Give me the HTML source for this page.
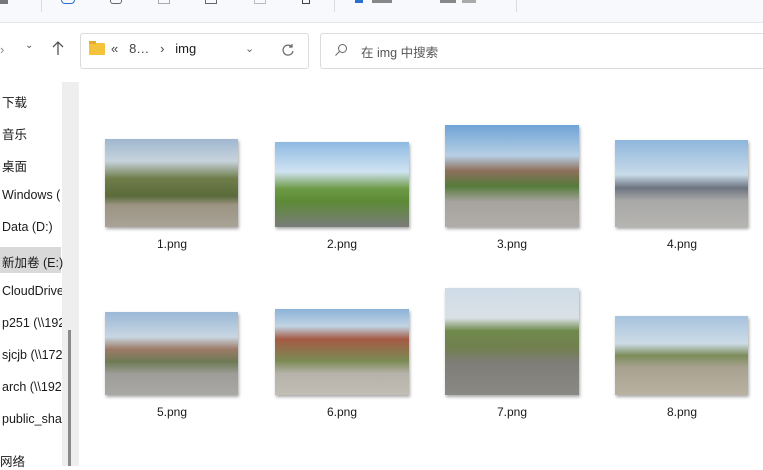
<!DOCTYPE html>
<html><head><meta charset="utf-8"><style>
body{margin:0;width:763px;height:466px;overflow:hidden;background:#fff;font-family:"Liberation Sans","Noto Sans CJK SC",sans-serif;position:relative}
.a{position:absolute}
.tb{left:0;top:0;width:763px;height:22px;background:#f7f9fc;border-bottom:1px solid #e6e6e6}
.nav{font-size:12.5px;color:#1a1a1a}
.th{position:absolute;box-shadow:1px 2px 3px rgba(0,0,0,.35)}
.lb{position:absolute;width:134px;text-align:center;font-size:12px;color:#1a1a1a}
</style></head><body>
<div class="a tb"></div>
<div class="a" style="left:41px;top:0;width:1px;height:12px;background:#ddd"></div>
<div class="a" style="left:334px;top:0;width:1px;height:12px;background:#ddd"></div>
<div class="a" style="left:516px;top:0;width:1px;height:12px;background:#ddd"></div>
<div class="a" style="left:61px;top:0;width:12px;height:3px;border:1.5px solid #2a6fd0;border-top:none;border-radius:0 0 4px 4px"></div>
<div class="a" style="left:110px;top:0;width:10px;height:3px;border:1.5px solid #666;border-top:none;border-radius:0 0 3px 3px"></div>
<div class="a" style="left:158px;top:0;width:10px;height:3px;border:1px solid #aaa;border-top:none"></div>
<div class="a" style="left:205px;top:0;width:10px;height:3px;border:1.5px solid #666;border-top:none"></div>
<div class="a" style="left:254px;top:0;width:10px;height:3px;border:1px solid #bbb;border-top:none"></div>
<div class="a" style="left:302px;top:0;width:6px;height:3px;border:1.5px solid #444;border-top:none"></div>
<div class="a" style="left:355px;top:0;width:8px;height:3px;background:#2a6fd0"></div>
<div class="a" style="left:372px;top:0;width:20px;height:3px;background:#888"></div>
<div class="a" style="left:440px;top:0;width:16px;height:3px;background:#888"></div>
<div class="a" style="left:462px;top:0;width:14px;height:3px;background:#aaa"></div>
<div class="a" style="left:0;top:0;width:8px;height:4px;background:#777"></div>
<!-- address row -->
<div class="a" style="left:0;top:42px;font-size:13px;color:#888">›</div>
<div class="a" style="left:25px;top:40px;font-size:10px;color:#555">⌄</div>
<svg class="a" style="left:51px;top:40px" width="14" height="16"><path d="M7 2V15M2 7L7 2L12 7" stroke="#555" fill="none" stroke-width="1.3"/></svg>
<div class="a" style="left:80px;top:33px;width:227px;height:34px;border:1px solid #dcdcdc;border-radius:3px"></div>
<div class="a" style="left:89px;top:43px;width:16px;height:12px;background:#f5c33b;border-radius:1px"></div>
<div class="a" style="left:89px;top:41px;width:7px;height:3px;background:#e9a92c"></div>
<div class="a" style="left:111px;top:41px;font-size:13px;color:#444">« &nbsp;&nbsp;8… &nbsp;&nbsp;› &nbsp;&nbsp;<span style="color:#1a1a1a">img</span></div>
<div class="a" style="left:245px;top:42px;font-size:11px;color:#666">⌄</div>
<svg class="a" style="left:281px;top:43px" width="14" height="14"><path d="M11 4A5 5 0 1 0 12 8M11 1V4H8" stroke="#666" fill="none" stroke-width="1.2"/></svg>
<div class="a" style="left:320px;top:33px;width:450px;height:34px;border:1px solid #dcdcdc;border-radius:3px"></div>
<svg class="a" style="left:334px;top:43px" width="14" height="14"><circle cx="8.5" cy="5.5" r="4" stroke="#666" fill="none"/><path d="M5.5 8.5L1.5 12.5" stroke="#666"/></svg>
<div class="a" style="left:361px;top:42px;font-size:12.5px;color:#555">在 img 中搜索</div>
<!-- sidebar -->
<div class="a" style="left:0;top:247px;width:61px;height:26px;background:#d9d9d9"></div>
<div class="a" style="left:62px;top:82px;width:16px;height:384px;background:#eeeeee"></div>
<div class="a" style="left:68px;top:330px;width:3px;height:136px;background:#8a8a8a"></div>
<div class="a" style="left:78px;top:82px;width:1px;height:384px;background:#f0f0f0"></div>
<div class="a nav" style="left:2px;top:92px">下载</div>
<div class="a nav" style="left:2px;top:124px">音乐</div>
<div class="a nav" style="left:2px;top:156px">桌面</div>
<div class="a nav" style="left:2px;top:188px;width:60px;overflow:hidden;white-space:nowrap">Windows (</div>
<div class="a nav" style="left:2px;top:220px">Data (D:)</div>
<div class="a nav" style="left:2px;top:252px">新加卷 (E:)</div>
<div class="a nav" style="left:2px;top:284px;width:60px;overflow:hidden;white-space:nowrap">CloudDrive</div>
<div class="a nav" style="left:2px;top:316px;width:60px;overflow:hidden;white-space:nowrap">p251 (\\192</div>
<div class="a nav" style="left:2px;top:348px;width:60px;overflow:hidden;white-space:nowrap">sjcjb (\\172</div>
<div class="a nav" style="left:2px;top:380px;width:60px;overflow:hidden;white-space:nowrap">arch (\\192</div>
<div class="a nav" style="left:2px;top:412px;width:60px;overflow:hidden;white-space:nowrap">public_share</div>
<div class="a nav" style="left:0;top:451px">网络</div>
<!-- thumbnails -->
<div class="th" style="left:105px;top:139px;width:133px;height:88px;background:linear-gradient(#9fb7d0 0%,#c7d3dc 25%,#6f7d4a 45%,#5a6a3a 65%,#9c9483 75%,#a8a396 100%)"></div>
<div class="th" style="left:275px;top:142px;width:134px;height:85px;background:linear-gradient(#8fb9e2 0%,#cfe3f1 35%,#6d9a45 55%,#5c8a36 70%,#7a7c7a 100%)"></div>
<div class="th" style="left:445px;top:125px;width:134px;height:102px;background:linear-gradient(#6fa3d6 0%,#b7cfe4 30%,#8d6f5b 45%,#557b3b 60%,#a6a39e 75%,#b0ada8 100%)"></div>
<div class="th" style="left:615px;top:140px;width:133px;height:87px;background:linear-gradient(#8eb6dc 0%,#c9dbe9 40%,#6d7480 55%,#a9a9a8 70%,#b5b4b1 100%)"></div>
<div class="th" style="left:105px;top:312px;width:133px;height:83px;background:linear-gradient(#9bb8d6 0%,#c8d6e2 30%,#9c7a66 45%,#6e7a55 60%,#9f9d99 75%,#aaa8a4 100%)"></div>
<div class="th" style="left:275px;top:309px;width:134px;height:86px;background:linear-gradient(#8cb2d8 0%,#c1d4e3 20%,#a45a45 35%,#7b8a52 60%,#b5b2aa 75%,#c2beb6 100%)"></div>
<div class="th" style="left:445px;top:288px;width:134px;height:107px;background:linear-gradient(#cfdce7 0%,#d9e1e6 28%,#6f8a4c 40%,#71804e 55%,#7e7d78 70%,#8a8985 100%)"></div>
<div class="th" style="left:615px;top:316px;width:133px;height:79px;background:linear-gradient(#a7c3de 0%,#cddbe6 35%,#7c8c5a 50%,#a8a190 65%,#b9b2a2 100%)"></div>
<div class="lb" style="left:105px;top:237px">1.png</div>
<div class="lb" style="left:275px;top:237px">2.png</div>
<div class="lb" style="left:445px;top:237px">3.png</div>
<div class="lb" style="left:615px;top:237px">4.png</div>
<div class="lb" style="left:105px;top:405px">5.png</div>
<div class="lb" style="left:275px;top:405px">6.png</div>
<div class="lb" style="left:445px;top:405px">7.png</div>
<div class="lb" style="left:615px;top:405px">8.png</div>
</body></html>
